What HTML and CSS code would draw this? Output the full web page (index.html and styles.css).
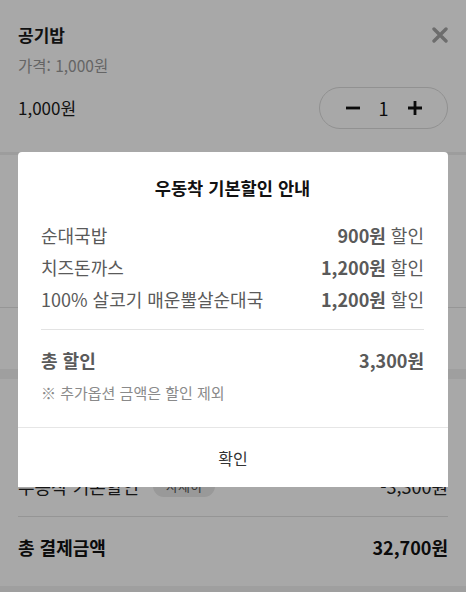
FILE: index.html
```html
<!DOCTYPE html>
<html lang="ko">
<head>
<meta charset="utf-8">
<title>공기밥</title>
<link rel="stylesheet" href="styles.css">
</head>
<body>
<div class="page">
  <section class="item">
    <div class="item-head">
      <h1 class="item-name">공기밥</h1>
      <button class="close" aria-label="닫기">
        <svg width="16" height="16" viewBox="0 0 16 16"><path d="M2 2L14 14M14 2L2 14" stroke="currentColor" stroke-width="3.4" stroke-linecap="round"/></svg>
      </button>
    </div>
    <div class="item-price">가격: 1,000원</div>
    <div class="item-row">
      <div class="item-total">1,000원</div>
      <div class="stepper">
        <svg class="step-icon" width="16" height="16" viewBox="0 0 16 16"><path d="M1 8H15" stroke="currentColor" stroke-width="2.8"/></svg>
        <span class="qty">1</span>
        <svg class="step-icon" width="16" height="16" viewBox="0 0 16 16"><path d="M1 8H15M8 1V15" stroke="currentColor" stroke-width="2.8"/></svg>
      </div>
    </div>
  </section>
  <div class="band-thin"></div>
  <section class="options"></section>
  <section class="request"></section>
  <div class="band"></div>
  <section class="summary">
    <div class="sum-rows">
      <div class="sum-row"><span class="sum-label">우동착 기본할인 <span class="chip">자세히</span></span><span>-3,300원</span></div>
    </div>
    <div class="sum-total"><span>총 결제금액</span><span>32,700원</span></div>
  </section>
  <div class="band"></div>
</div>

<div class="overlay"></div>

<div class="modal">
  <div class="modal-body">
    <h2 class="modal-title">우동착 기본할인 안내</h2>
    <ul class="disc-list">
      <li class="disc-row"><span>순대국밥</span><span><b>900원</b> 할인</span></li>
      <li class="disc-row"><span>치즈돈까스</span><span><b>1,200원</b> 할인</span></li>
      <li class="disc-row"><span>100% 살코기 매운뿔살순대국</span><span><b>1,200원</b> 할인</span></li>
    </ul>
    <div class="disc-total"><span>총 할인</span><span>3,300원</span></div>
    <p class="disc-note">※ 추가옵션 금액은 할인 제외</p>
  </div>
  <button class="modal-btn">확인</button>
</div>
</body>
</html>
```

FILE: styles.css
```css
* { box-sizing: border-box; }
html, body {
  margin: 0;
  padding: 0;
  background: #fff;
  font-family: "Noto Sans CJK KR", "Noto Sans", sans-serif;
  color: #1a1a1a;
}
.page {
  width: 466px;
  min-height: 592px;
  background: #fff;
}
.item {
  height: 152px;
  padding: 22px 18px 0 18px;
}
.item-head {
  display: flex;
  justify-content: space-between;
  align-items: center;
  height: 26px;
}
.item-name {
  margin: 0;
  font-size: 17px;
  font-weight: 700;
  line-height: 26px;
}
.close {
  border: 0;
  background: none;
  padding: 0;
  color: #a6a6a6;
  width: 16px;
  height: 16px;
  display: flex;
}
.item-price {
  margin-top: 6px;
  font-size: 15.5px;
  line-height: 22px;
  color: #9a9a9a;
}
.item-row {
  margin-top: 11px;
  display: flex;
  justify-content: space-between;
  align-items: center;
}
.item-total {
  font-size: 17px;
  line-height: 24px;
}
.stepper {
  width: 129px;
  height: 42px;
  border: 1px solid #dcdcdc;
  border-radius: 21px;
  display: flex;
  align-items: center;
  justify-content: center;
  gap: 16px;
  color: #111;
}
.qty {
  font-size: 18px;
  width: 14px;
  text-align: center;
}
.step-icon { display: block; }
.band-thin {
  height: 3px;
  background: #eeeeee;
}
.options {
  height: 153px;
  border-bottom: 1px solid #e4e4e4;
}
.request {
  height: 61px;
}
.band {
  height: 10px;
  background: #f1f1f1;
}
.summary {
  padding: 91px 18px 0 18px;
}
.sum-rows {
  border-bottom: 1px solid #e2e2e2;
  padding-bottom: 14px;
}
.sum-row {
  display: flex;
  justify-content: space-between;
  align-items: center;
  height: 32px;
  font-size: 18px;
  color: #222;
}
.sum-label {
  display: flex;
  align-items: center;
  gap: 14px;
}
.chip {
  font-size: 13px;
  color: #555;
  background: #e8e8e8;
  border-radius: 11px;
  padding: 0 13px;
  line-height: 22px;
}
.sum-total {
  display: flex;
  justify-content: space-between;
  align-items: center;
  height: 32px;
  margin: 14px 0 23px 0;
  font-size: 18px;
  font-weight: 700;
  color: #111;
}
.overlay {
  position: fixed;
  inset: 0;
  background: rgba(0, 0, 0, 0.34);
}
.modal {
  position: absolute;
  left: 18px;
  top: 152px;
  width: 430px;
  background: #fff;
  border-radius: 4px 4px 0 0;
}
.modal-body {
  padding: 24px 24px 23px 23px;
  border-bottom: 1px solid #e6e6e6;
}
.modal-title {
  margin: 0;
  text-align: center;
  font-size: 17.6px;
  font-weight: 700;
  line-height: 24px;
  color: #111;
}
.disc-list {
  list-style: none;
  margin: 19px 0 0 0;
  padding: 0 0 14px 0;
  border-bottom: 1px solid #e3e3e3;
}
.disc-row {
  display: flex;
  justify-content: space-between;
  align-items: center;
  height: 32px;
  font-size: 18px;
  color: #5a5a5a;
}
.disc-row b {
  font-weight: 700;
}
.disc-total {
  display: flex;
  justify-content: space-between;
  align-items: center;
  height: 32px;
  margin-top: 14px;
  font-size: 18px;
  font-weight: 700;
  color: #5a5a5a;
}
.disc-note {
  margin: 6px 0 0 0;
  font-size: 15px;
  line-height: 22px;
  color: #8a8a8a;
}
.modal-btn {
  display: block;
  width: 100%;
  height: 59px;
  border: 0;
  background: #fff;
  font-family: inherit;
  font-size: 16px;
  color: #333;
  padding: 0;
}
```
